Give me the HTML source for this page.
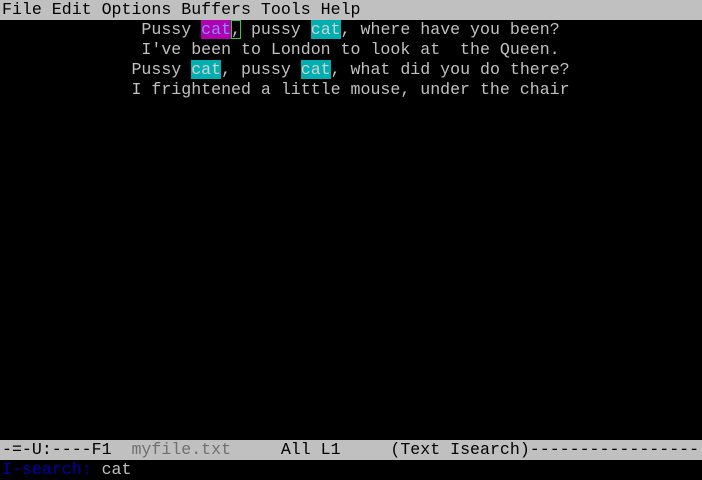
<!DOCTYPE html>
<html><head><style>
html,body{margin:0;padding:0;background:#000;width:702px;height:480px;overflow:hidden}
.r{position:absolute;left:0;width:702px;height:20px;font-family:"Liberation Mono",monospace;font-size:16.6px;line-height:20px;white-space:pre;color:#c0c0c0;padding-left:2px;box-sizing:border-box}
.g{background:#c0c0c0;color:#000}
.m{background:#b000b0;color:#8c8cff}
.c{background:#00b0b0;color:#d0d0d0}
.cur{outline:1px solid #30d030;outline-offset:-1px}
.f{color:#707070}
.b{color:#0000b0}
</style></head><body>
<div class="r g" style="top:0">File Edit Options Buffers Tools Help</div>
<div class="r" style="top:20px">              Pussy <span class="m">cat</span><span class="cur">,</span> pussy <span class="c">cat</span>, where have you been?</div>
<div class="r" style="top:40px">              I've been to London to look at  the Queen.</div>
<div class="r" style="top:60px">             Pussy <span class="c">cat</span>, pussy <span class="c">cat</span>, what did you do there?</div>
<div class="r" style="top:80px">             I frightened a little mouse, under the chair</div>
<div class="r g" style="top:440px">-=-U:----F1  <span class="f">myfile.txt</span>     All L1     (Text Isearch)-----------------</div>
<div class="r" style="top:460px"><span class="b">I-search:</span> cat</div>
</body></html>
